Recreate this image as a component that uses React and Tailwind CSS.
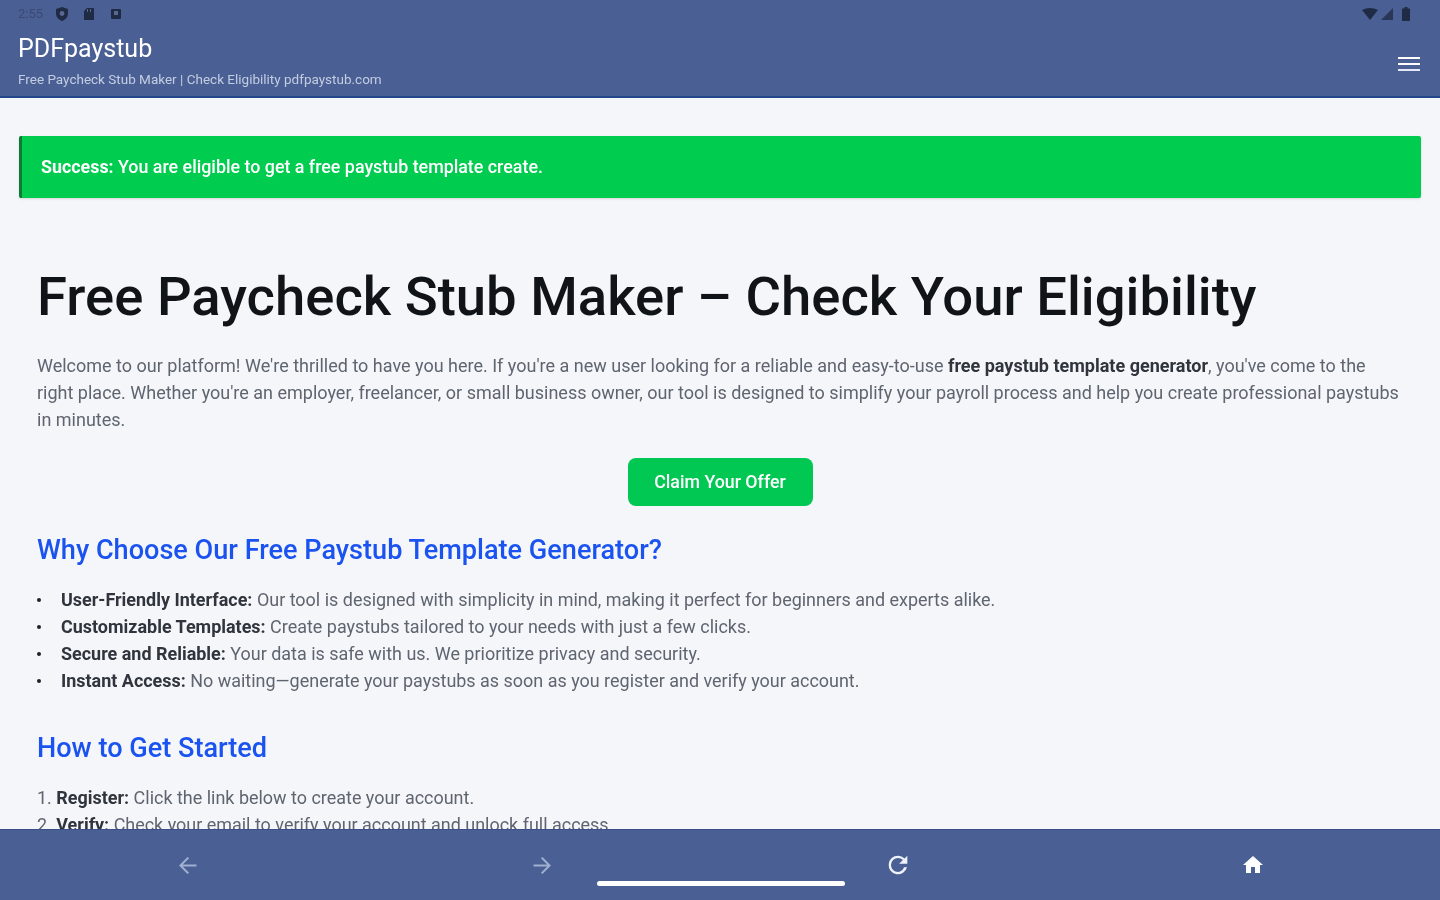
import React from "react";

function HomeIcon() {
  return (
    <svg width="24" height="24" viewBox="0 0 24 24" fill="#fff"><path d="M10 20v-6h4v6h5v-8h3L12 3 2 12h3v8z" /></svg>
  );
}

function ReloadIcon() {
  return (
    <svg width="28" height="28" viewBox="0 0 24 24" fill="#eef2fa"><path d="M17.650 6.350A7.950 7.950 0 0 0 12 4a8 8 0 1 0 7.730 10h-2.600A5.990 5.990 0 0 1 12 18a6 6 0 1 1 0-12c1.660 0 3.140.69 4.220 1.780L13 11h7V4z" /></svg>
  );
}

function BackIcon() {
  return (
    <svg width="27" height="27" viewBox="0 0 24 24" fill="#9fb0d0"><path d="M20 11.200H7.830l5.590-5.590L12 4.500l-7.500 7.500 7.500 7.500 1.410-1.110-5.580-5.590H20z" /></svg>
  );
}

function ForwardIcon() {
  return (
    <svg width="27" height="27" viewBox="0 0 24 24" fill="#9fb0d0"><path d="M4 11.200h12.170l-5.590-5.590L12 4.500l7.500 7.500-7.500 7.500-1.410-1.110 5.580-5.590H4z" /></svg>
  );
}

const textTone = "leading-[27px] text-[#5f6570] blur-[0.7px]";
const strong = "font-bold text-[#30353d]";
const h2 = "text-[27.100px] font-medium leading-[38px] text-[#1a53f0] blur-[0.5px]";

function Bullet({ children }) {
  return (
    <li className="flex">
      <span className="flex h-[27px] w-[24px] shrink-0 items-center"><span className="h-[4px] w-[4px] rounded-full bg-[#222]" /></span>
      <span>{children}</span>
    </li>
  );
}

export default function App() {
  return (
    <div className="flex h-[900px] w-[1440px] flex-col overflow-hidden bg-[#f4f6f9] font-['Roboto',sans-serif]">
      <header className="h-[98px] shrink-0 border-b-2 border-[#24478a] bg-[#4a5f93] pl-[18px] pr-[19px]">
        <div className="flex h-[28px] items-center justify-between">
          <div className="flex items-center text-[13px] text-[#3b4a72]">
            <span className="w-[37px] blur-[0.7px]">2:55</span>
            <svg width="14" height="14" viewBox="0 0 14 14" fill="#1f2a44" className="blur-[0.6px]"><path d="M7 0l6 2v4.500c0 3.500-2.500 6-6 7.500-3.500-1.500-6-4-6-7.500V2z" /><circle cx="7" cy="6.500" r="2.400" fill="#59688f" /></svg>
            <svg width="14" height="14" viewBox="0 0 14 14" fill="#1f2a44" className="ml-[13px] blur-[0.6px]"><path d="M5 1h7v12H2V4z" /><rect x="5" y="2" width="1" height="3" fill="#59688f" /><rect x="8" y="2" width="1" height="3" fill="#59688f" /></svg>
            <svg width="12" height="12" viewBox="0 0 12 12" fill="#1f2a44" className="ml-[14px] blur-[0.6px]"><rect x="1" y="1" width="10" height="10" rx="1" /><rect x="4" y="3" width="4" height="4" fill="#59688f" /></svg>
          </div>
          <div className="mr-[11px] flex items-center gap-[3px] blur-[0.6px]">
            <svg width="16" height="12" viewBox="0 0 16 12" fill="#1f2a44"><path d="M0 2 Q8 -2 16 2 L8 12z" /></svg>
            <svg width="12" height="12" viewBox="0 0 12 12" fill="#2a3658"><path d="M12 0v12H0z" /></svg>
            <svg width="8" height="14" viewBox="0 0 8 14" fill="#1f2a44" className="ml-[6px]"><path d="M2.500 0h3v1.500H8V14H0V1.500h2.500z" /></svg>
          </div>
        </div>
        <div className="flex items-start justify-between">
          <div>
            <div className="mt-[4px] text-[25px] leading-[34px] text-white blur-[0.6px]">PDFpaystub</div>
            <div className="mt-[4px] text-[13.500px] leading-[18px] text-[#c3cde2] blur-[0.7px]">Free Paycheck Stub Maker | Check Eligibility pdfpaystub.com</div>
          </div>
          <div className="mt-[29px] mr-[1px] flex w-[22px] flex-col gap-[4px]">
            <span className="h-[2px] bg-white" />
            <span className="h-[2px] bg-white" />
            <span className="h-[2px] bg-[#e4e9f5]" />
          </div>
        </div>
      </header>

      <main className="min-h-0 flex-1 overflow-hidden">
        <div className="mx-[19px] mt-[38px] flex h-[62px] items-center rounded-[2px] border-l-[3px] border-[#0a7a35] bg-[#00cc4f] pl-[19px] text-[17.850px] font-medium text-white shadow-sm">
          <span className="blur-[0.6px]"><span className="font-bold">Success:</span> You are eligible to get a free paystub template create.</span>
        </div>
        <div className="px-[37px]">
          <h1 className="mt-[61px] text-[54.450px] font-medium leading-[74px] text-[#101418] blur-[0.5px]">Free Paycheck Stub Maker – Check Your Eligibility</h1>
          <p className={`mt-[19px] text-[18px] ${textTone}`}>
            Welcome to our platform! We're thrilled to have you here. If you're a new user looking for a reliable and easy-to-use <b className={strong}>free paystub template generator</b>, you've come to the right place. Whether you're an employer, freelancer, or small business owner, our tool is designed to simplify your payroll process and help you create professional paystubs in minutes.
          </p>
          <div className="mt-[25px] flex justify-center">
            <div className="flex h-[48px] w-[185px] items-center justify-center rounded-[8px] bg-[#00c853] text-[17.800px] font-medium text-white"><span className="blur-[0.6px]">Claim Your Offer</span></div>
          </div>
          <h2 className={`mt-[25px] ${h2}`}>Why Choose Our Free Paystub Template Generator?</h2>
          <ul className={`mt-[17px] text-[17.970px] ${textTone}`}>
            <Bullet><b className={strong}>User-Friendly Interface:</b> Our tool is designed with simplicity in mind, making it perfect for beginners and experts alike.</Bullet>
            <Bullet><b className={strong}>Customizable Templates:</b> Create paystubs tailored to your needs with just a few clicks.</Bullet>
            <Bullet><b className={strong}>Secure and Reliable:</b> Your data is safe with us. We prioritize privacy and security.</Bullet>
            <Bullet><b className={strong}>Instant Access:</b> No waiting—generate your paystubs as soon as you register and verify your account.</Bullet>
          </ul>
          <h2 className={`mt-[35px] ${h2}`}>How to Get Started</h2>
          <ol className={`mt-[17px] text-[17.950px] ${textTone}`}>
            <li>1. <b className={strong}>Register:</b> Click the link below to create your account.</li>
            <li>2. <b className={strong}>Verify:</b> Check your email to verify your account and unlock full access.</li>
          </ol>
        </div>
      </main>

      <nav className="relative flex h-[71px] shrink-0 items-start border-t border-[#3a4f85] bg-[#4a5f93] pt-[21px]">
        <div className="flex h-[28px] w-[375px] items-center justify-center"><span className="blur-[0.5px]"><BackIcon /></span></div>
        <div className="flex h-[28px] w-[334px] items-center justify-center"><span className="blur-[0.5px]"><ForwardIcon /></span></div>
        <div className="flex h-[28px] w-[377px] items-center justify-center"><ReloadIcon /></div>
        <div className="flex h-[28px] w-[334px] items-center justify-center"><HomeIcon /></div>
        <span className="absolute bottom-[14px] left-[597px] h-[5px] w-[248px] rounded-full bg-white" />
      </nav>
    </div>
  );
}
